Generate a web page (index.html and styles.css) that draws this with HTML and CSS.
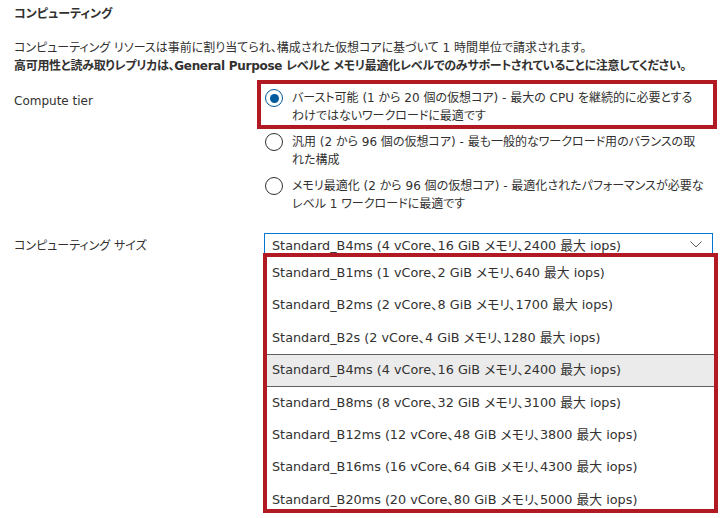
FILE: index.html
```html
<!DOCTYPE html>
<html lang="ja">
<head>
    <meta charset="UTF-8">
    <meta name="viewport" content="width=device-width, initial-scale=1.0">
    <title>コンピューティング</title>
    <link rel="stylesheet" href="styles.css">
</head>
<body>
    <div class="page">
        <h2 class="title">コンピューティング</h2>

        <p class="desc">
            <span class="line">コンピューティング リソースは事前に割り当てられ、構成された仮想コアに基づいて 1 時間単位で請求されます。</span>
            <strong class="line">高可用性と読み取りレプリカは、General Purpose レベルと メモリ最適化レベルでのみサポートされていることに注意してください。</strong>
        </p>

        <div class="field">
            <div class="field-label">Compute tier</div>
            <div class="field-control">
                <div class="radio-group">
                    <label class="radio-option highlight">
                        <span class="radio checked"></span>
                        <span class="radio-text">
                            <span class="line">バースト可能 (1 から 20 個の仮想コア) - 最大の CPU を継続的に必要とする</span>
                            <span class="line">わけではないワークロードに最適です</span>
                        </span>
                    </label>
                    <label class="radio-option">
                        <span class="radio"></span>
                        <span class="radio-text">
                            <span class="line">汎用 (2 から 96 個の仮想コア) - 最も一般的なワークロード用のバランスの取</span>
                            <span class="line">れた構成</span>
                        </span>
                    </label>
                    <label class="radio-option">
                        <span class="radio"></span>
                        <span class="radio-text">
                            <span class="line">メモリ最適化 (2 から 96 個の仮想コア) - 最適化されたパフォーマンスが必要な</span>
                            <span class="line">レベル 1 ワークロードに最適です</span>
                        </span>
                    </label>
                </div>
            </div>
        </div>

        <div class="field size-field">
            <div class="field-label size-label">コンピューティング サイズ</div>
            <div class="field-control">
                <div class="select">
                    <span class="select-value">Standard_B4ms (4 vCore、16 GiB メモリ、2400 最大 iops)</span>
                    <svg class="chevron" width="12" height="7" viewBox="0 0 12 7">
                        <polyline points="0.5,0.5 6,6 11.5,0.5" fill="none" stroke="#605e5c" stroke-width="1"/>
                    </svg>
                </div>
                <ul class="dropdown">
                    <li class="option">Standard_B1ms (1 vCore、2 GiB メモリ、640 最大 iops)</li>
                    <li class="option">Standard_B2ms (2 vCore、8 GiB メモリ、1700 最大 iops)</li>
                    <li class="option">Standard_B2s (2 vCore、4 GiB メモリ、1280 最大 iops)</li>
                    <li class="option selected">Standard_B4ms (4 vCore、16 GiB メモリ、2400 最大 iops)</li>
                    <li class="option">Standard_B8ms (8 vCore、32 GiB メモリ、3100 最大 iops)</li>
                    <li class="option">Standard_B12ms (12 vCore、48 GiB メモリ、3800 最大 iops)</li>
                    <li class="option">Standard_B16ms (16 vCore、64 GiB メモリ、4300 最大 iops)</li>
                    <li class="option">Standard_B20ms (20 vCore、80 GiB メモリ、5000 最大 iops)</li>
                </ul>
            </div>
        </div>
    </div>
</body>
</html>
```

FILE: styles.css
```css
* {
    margin: 0;
    padding: 0;
    box-sizing: border-box;
}

body {
    font-family: "DejaVu Sans", "Noto Sans CJK JP", sans-serif;
    font-size: 12px;
    font-feature-settings: "palt";
    color: #323130;
    background: white;
    overflow: hidden;
}

.page {
    padding: 5px 0 0 14px;
    width: 722px;
}

.title {
    font-size: 12px;
    font-weight: bold;
    line-height: 18px;
}

.desc {
    margin-top: 16px;
    line-height: 18px;
}

.line {
    display: block;
    white-space: nowrap;
}

.desc strong {
    font-weight: bold;
    letter-spacing: -0.3px;
}

/* Form rows */
.field {
    display: flex;
    margin-top: 15px;
}

.field-label {
    width: 250px;
    flex-shrink: 0;
    line-height: 22px;
}

.size-label {
    padding-top: 2px;
}

.field-control {
    width: 450px;
}

.size-field {
    margin-top: 20px;
}

/* Radio group */
.radio-group {
    display: flex;
    flex-direction: column;
    gap: 8px;
    margin-top: -1px;
}

.radio-option {
    display: flex;
    gap: 9px;
    line-height: 18px;
    position: relative;
    margin-left: 1px;
}

.radio-option.highlight::after {
    content: "";
    position: absolute;
    top: -9px;
    bottom: -4px;
    left: -8px;
    right: -3px;
    border: 4px solid #b11a23;
}

.radio {
    width: 18px;
    height: 18px;
    border: 1px solid #323130;
    border-radius: 50%;
    flex-shrink: 0;
    display: flex;
    align-items: center;
    justify-content: center;
}

.radio.checked {
    border-color: #005a9e;
}

.radio.checked::before {
    content: "";
    width: 9px;
    height: 9px;
    border-radius: 50%;
    background: #005a9e;
}

/* Select + open dropdown */
.select {
    height: 22px;
    border: 1px solid #0078d4;
    display: flex;
    align-items: center;
    justify-content: space-between;
    padding: 0 10px 0 7px;
    width: 449px;
    font-size: 12.8px;
}

.chevron {
    display: block;
}

.dropdown {
    list-style: none;
    margin: -2px -4px 0 -1px;
    border: 4px solid #b11a23;
    height: 260px;
    overflow: hidden;
    background: white;
    font-size: 12.8px;
}

.option {
    height: 32.4px;
    line-height: 32.4px;
    padding-left: 5px;
    white-space: nowrap;
}

.option.selected {
    background: #ebebeb;
    border-top: 1px solid #5f5f5f;
    border-bottom: 1px solid #5f5f5f;
    line-height: 30.4px;
}
```
